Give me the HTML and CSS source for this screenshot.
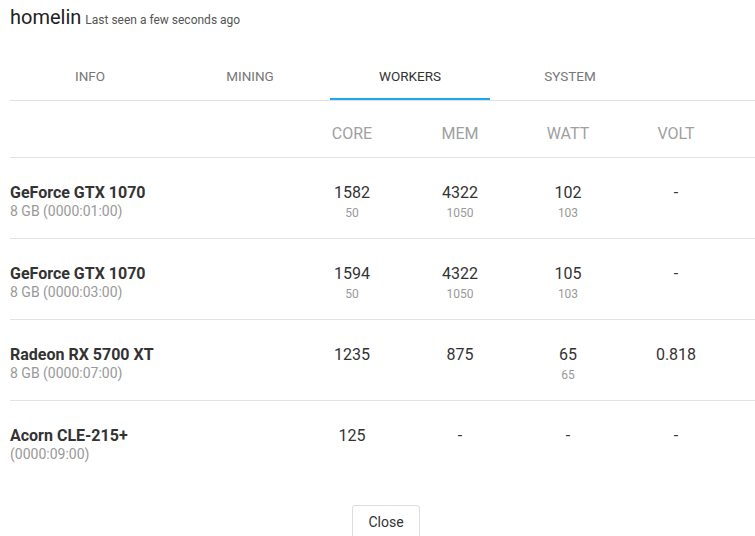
FILE: index.html
```html
<!DOCTYPE html>
<html>
<head>
<meta charset="utf-8">
<link rel="stylesheet" href="styles.css">
</head>
<body>
<div class="dialog">
  <div class="title"><span class="name">homelin</span> <span class="seen">Last seen a few seconds ago</span></div>
  <div class="tabs">
    <div class="tab">INFO</div>
    <div class="tab">MINING</div>
    <div class="tab active">WORKERS</div>
    <div class="tab">SYSTEM</div>
  </div>
  <div class="table">
    <div class="row head">
      <div class="c name"></div>
      <div class="c">CORE</div>
      <div class="c">MEM</div>
      <div class="c">WATT</div>
      <div class="c">VOLT</div>
    </div>
    <div class="row">
      <div class="c name"><div class="gpu">GeForce GTX 1070</div><div class="sub">8 GB (0000:01:00)</div></div>
      <div class="c"><div class="v">1582</div><div class="vs">50</div></div>
      <div class="c"><div class="v">4322</div><div class="vs">1050</div></div>
      <div class="c"><div class="v">102</div><div class="vs">103</div></div>
      <div class="c"><div class="v">-</div></div>
    </div>
    <div class="row">
      <div class="c name"><div class="gpu">GeForce GTX 1070</div><div class="sub">8 GB (0000:03:00)</div></div>
      <div class="c"><div class="v">1594</div><div class="vs">50</div></div>
      <div class="c"><div class="v">4322</div><div class="vs">1050</div></div>
      <div class="c"><div class="v">105</div><div class="vs">103</div></div>
      <div class="c"><div class="v">-</div></div>
    </div>
    <div class="row">
      <div class="c name"><div class="gpu">Radeon RX 5700 XT</div><div class="sub">8 GB (0000:07:00)</div></div>
      <div class="c"><div class="v">1235</div></div>
      <div class="c"><div class="v">875</div></div>
      <div class="c"><div class="v">65</div><div class="vs">65</div></div>
      <div class="c"><div class="v">0.818</div></div>
    </div>
    <div class="row last">
      <div class="c name"><div class="gpu">Acorn CLE-215+</div><div class="sub">(0000:09:00)</div></div>
      <div class="c"><div class="v">125</div></div>
      <div class="c"><div class="v">-</div></div>
      <div class="c"><div class="v">-</div></div>
      <div class="c"><div class="v">-</div></div>
    </div>
  </div>
  <div class="actions"><button class="btn">Close</button></div>
</div>
</body>
</html>
```
FILE: styles.css
```css
html, body {
  margin: 0;
  padding: 0;
  background: #fff;
  overflow: hidden;
}
body {
  font-family: Roboto, "Liberation Sans", sans-serif;
  color: #333;
}
.dialog {
  width: 752px;
  padding-left: 10px;
}
.title {
  padding-top: 6px;
  height: 55px;
  box-sizing: border-box;
  line-height: 22px;
}
.title .name {
  font-size: 20px;
  color: #222;
}
.title .seen {
  font-size: 12px;
  color: #555;
}
.tabs {
  display: flex;
  border-bottom: 1px solid #e0e0e0;
}
.tab {
  width: 160px;
  height: 45px;
  box-sizing: border-box;
  text-align: center;
  font-size: 13.5px;
  line-height: 43px;
  color: #777;
}
.tab.active {
  color: #333;
  border-bottom: 2px solid #1ea6ec;
}
.row {
  display: flex;
  border-bottom: 1px solid #e3e3e3;
  height: 81px;
  box-sizing: border-box;
  padding-top: 26px;
}
.row.head {
  height: 57px;
  padding-top: 23px;
}
.row.last {
  border-bottom: none;
}
.c {
  width: 108px;
  text-align: center;
}
.c.name {
  width: 288px;
  text-align: left;
}
.head .c {
  font-size: 16px;
  line-height: 20px;
  color: #a0a0a0;
}
.gpu {
  font-size: 16px;
  font-weight: bold;
  line-height: 18px;
  color: #333;
}
.sub {
  font-size: 14px;
  line-height: 18px;
  color: #999;
}
.v {
  font-size: 16px;
  line-height: 18px;
  color: #333;
}
.vs {
  font-size: 12px;
  line-height: 18px;
  margin-top: 2px;
  color: #999;
}
.actions {
  display: flex;
  justify-content: center;
  padding-top: 23px;
}
.btn {
  font-family: Roboto, "Liberation Sans", sans-serif;
  font-size: 14px;
  color: #333;
  background: #fff;
  border: 1px solid #ddd;
  border-radius: 3px;
  width: 68px;
  height: 34px;
  padding: 0;
}
```
